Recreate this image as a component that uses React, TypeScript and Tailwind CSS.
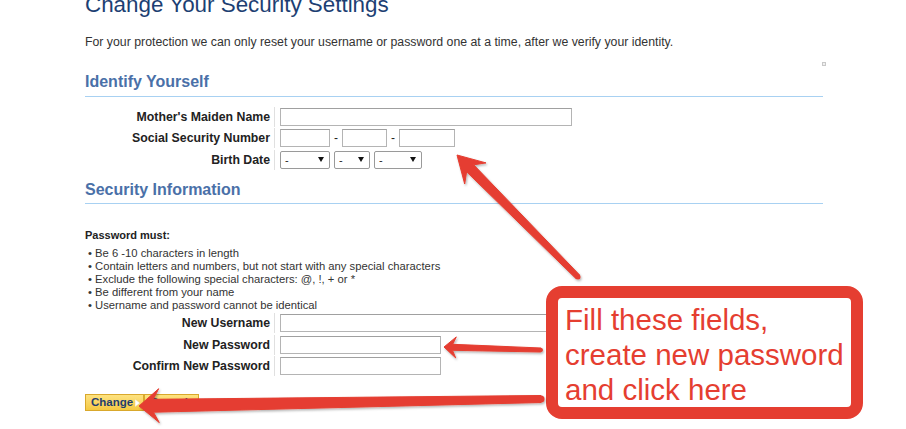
import React from 'react';

type Pt = [number, number];

// builds a tapered "skitch" style arrow polygon from tail to tip
function arrowPoints(tail: Pt, tip: Pt, headLen: number, headHalf: number, shaftHead: number, shaftTail: number) {
    const dx = tip[0] - tail[0];
    const dy = tip[1] - tail[1];
    const len = Math.hypot(dx, dy);
    const ux = dx / len, uy = dy / len;
    const nx = -uy, ny = ux;
    const bx = tip[0] - ux * headLen, by = tip[1] - uy * headLen;
    const jx = tip[0] - ux * headLen * 0.72, jy = tip[1] - uy * headLen * 0.72;
    const pts: Pt[] = [
        tip,
        [bx + nx * headHalf, by + ny * headHalf],
        [jx + nx * shaftHead / 2, jy + ny * shaftHead / 2],
        [tail[0] + nx * shaftTail / 2, tail[1] + ny * shaftTail / 2],
        [tail[0] - nx * shaftTail / 2, tail[1] - ny * shaftTail / 2],
        [jx - nx * shaftHead / 2, jy - ny * shaftHead / 2],
        [bx - nx * headHalf, by - ny * headHalf],
    ];
    return pts.map(p => `${p[0].toFixed(1)},${p[1].toFixed(1)}`).join(' ');
}

const arrows = [
    { tail: [578, 277] as Pt, tip: [457, 155] as Pt, headLen: 26, headHalf: 15, shaftHead: 10, shaftTail: 5 },
    { tail: [541, 350] as Pt, tip: [444, 347] as Pt, headLen: 12, headHalf: 10.5, shaftHead: 6, shaftTail: 4 },
    { tail: [541, 399] as Pt, tip: [139, 406] as Pt, headLen: 20, headHalf: 17, shaftHead: 13, shaftTail: 7 },
];

function Row({ label, children }: { label: string; children: React.ReactNode }) {
    return (
        <div className="flex h-[21.5px] items-center">
            <div className="w-[185px] text-right text-[12.3px] font-bold text-[#222]">{label}</div>
            <div className="ml-[4px] h-[20px] w-px bg-[#e0e0e0]" />
            <div className="ml-[5px] flex items-center">{children}</div>
        </div>
    );
}

function TextBox({ w }: { w: string }) {
    return <div className={`${w} h-[18px] border border-[#b4b4b4] border-t-[#a0a0a0] bg-white`} />;
}

function SelectBox({ w }: { w: string }) {
    return (
        <div className={`${w} flex h-[18px] items-center justify-between rounded-[2px] border border-[#9a9a9a] bg-white pl-[4px] pr-[5px] text-[11px] text-[#222]`}>
            <span>-</span>
            <svg width="6" height="5" viewBox="0 0 6 5"><polygon points="0,0 6,0 3,5" fill="#111" /></svg>
        </div>
    );
}

function Heading({ children }: { children: React.ReactNode }) {
    return (
        <h2 className="w-[738px] border-b border-[#a8d1f2] text-[16px] font-bold leading-[20px] text-[#4a70a8]">
            {children}
        </h2>
    );
}

function YellowButton({ label }: { label: string }) {
    return (
        <button className="flex h-[17px] items-center gap-[2px] border border-[#d9a82c] bg-linear-to-b from-[#fde27f] to-[#f5c940] pl-[5px] pr-[3px] text-[11.5px] font-bold text-[#1f3d6e]">
            {label}
            <svg width="5" height="8" viewBox="0 0 5 8"><polygon points="0,0 5,4 0,8" fill="#fff" stroke="#e7cf8a" strokeWidth="0.5" /></svg>
        </button>
    );
}

export default function App() {
    const bullets = [
        'Be 6 -10 characters in length',
        'Contain letters and numbers, but not start with any special characters',
        'Exclude the following special characters: @, !, + or *',
        'Be different from your name',
        'Username and password cannot be identical',
    ];

    return (
        <div className="relative h-[429px] w-[906px] overflow-hidden bg-white font-['Liberation_Sans',Arial,sans-serif]">
            <div className="pl-[85px]">
                <h1 className="mt-[-8px] text-[22.4px] leading-[26px] text-[#1d3f73]">Change Your Security Settings</h1>
                <p className="mt-[17px] text-[12.3px] leading-[14px] text-[#333]">
                    For your protection we can only reset your username or password one at a time, after we verify your identity.
                </p>
                <div className="flex h-[22px] w-[741px] justify-end pt-[13px]">
                    <div className="h-[4px] w-[4px] border border-[#c8c8c8] bg-[#f0f0f0]" />
                </div>

                <div className="mt-px">
                    <Heading>
                        <div className="pb-[4px]">Identify Yourself</div>
                    </Heading>
                </div>

                <div className="mt-[9px]">
                    <Row label="Mother's Maiden Name">
                        <TextBox w="w-[292px]" />
                    </Row>
                    <Row label="Social Security Number">
                        <TextBox w="w-[50px]" />
                        <span className="mx-[4px] text-[12px] text-[#222]">-</span>
                        <TextBox w="w-[45px]" />
                        <span className="mx-[4px] text-[12px] text-[#222]">-</span>
                        <TextBox w="w-[56px]" />
                    </Row>
                    <Row label="Birth Date">
                        <SelectBox w="w-[50px]" />
                        <div className="w-[4px]" />
                        <SelectBox w="w-[36px]" />
                        <div className="w-[4px]" />
                        <SelectBox w="w-[48px]" />
                    </Row>
                </div>

                <div className="mt-[9px]">
                    <Heading>
                        <div className="pb-[3px]">Security Information</div>
                    </Heading>
                </div>

                <div className="mt-[25px] text-[11px] font-bold leading-[13px] text-[#222]">Password must:</div>
                <ul className="mt-[5px] pl-[3px] text-[11.25px] leading-[13px] text-[#333]">
                    {bullets.map(b => (
                        <li key={b}>• {b}</li>
                    ))}
                </ul>

                <div className="mt-px">
                    <Row label="New Username">
                        <TextBox w="w-[292px]" />
                    </Row>
                    <Row label="New Password">
                        <TextBox w="w-[161px]" />
                    </Row>
                    <Row label="Confirm New Password">
                        <TextBox w="w-[161px]" />
                    </Row>
                </div>

                <div className="mt-[17px] flex">
                    <YellowButton label="Change" />
                    <YellowButton label="Cancel" />
                </div>
            </div>

            {/* annotation callout */}
            <div className="absolute left-[546px] top-[286px] h-[133px] w-[317px] rounded-[16px] border-[12px] border-[#e53e31] bg-white pl-[7px] pt-[4px] text-[29.5px] leading-[35px] text-[#e53e31]">
                Fill these fields,<br />
                create new password<br />
                and click here
            </div>

            <svg className="pointer-events-none absolute left-0 top-0" width="906" height="429" viewBox="0 0 906 429">
                <defs>
                    <filter id="shadow" x="-10%" y="-10%" width="120%" height="130%">
                        <feDropShadow dx="1" dy="1.5" stdDeviation="1" floodColor="#000" floodOpacity="0.3" />
                    </filter>
                </defs>
                {arrows.map((a, i) => (
                    <g key={i} filter="url(#shadow)">
                        <polygon points={arrowPoints(a.tail, a.tip, a.headLen, a.headHalf, a.shaftHead, a.shaftTail)} fill="#e53e31" strokeLinejoin="round" stroke="#e53e31" strokeWidth="1" />
                        <circle cx={a.tail[0]} cy={a.tail[1]} r={a.shaftTail / 2} fill="#e53e31" />
                    </g>
                ))}
            </svg>
        </div>
    );
}
